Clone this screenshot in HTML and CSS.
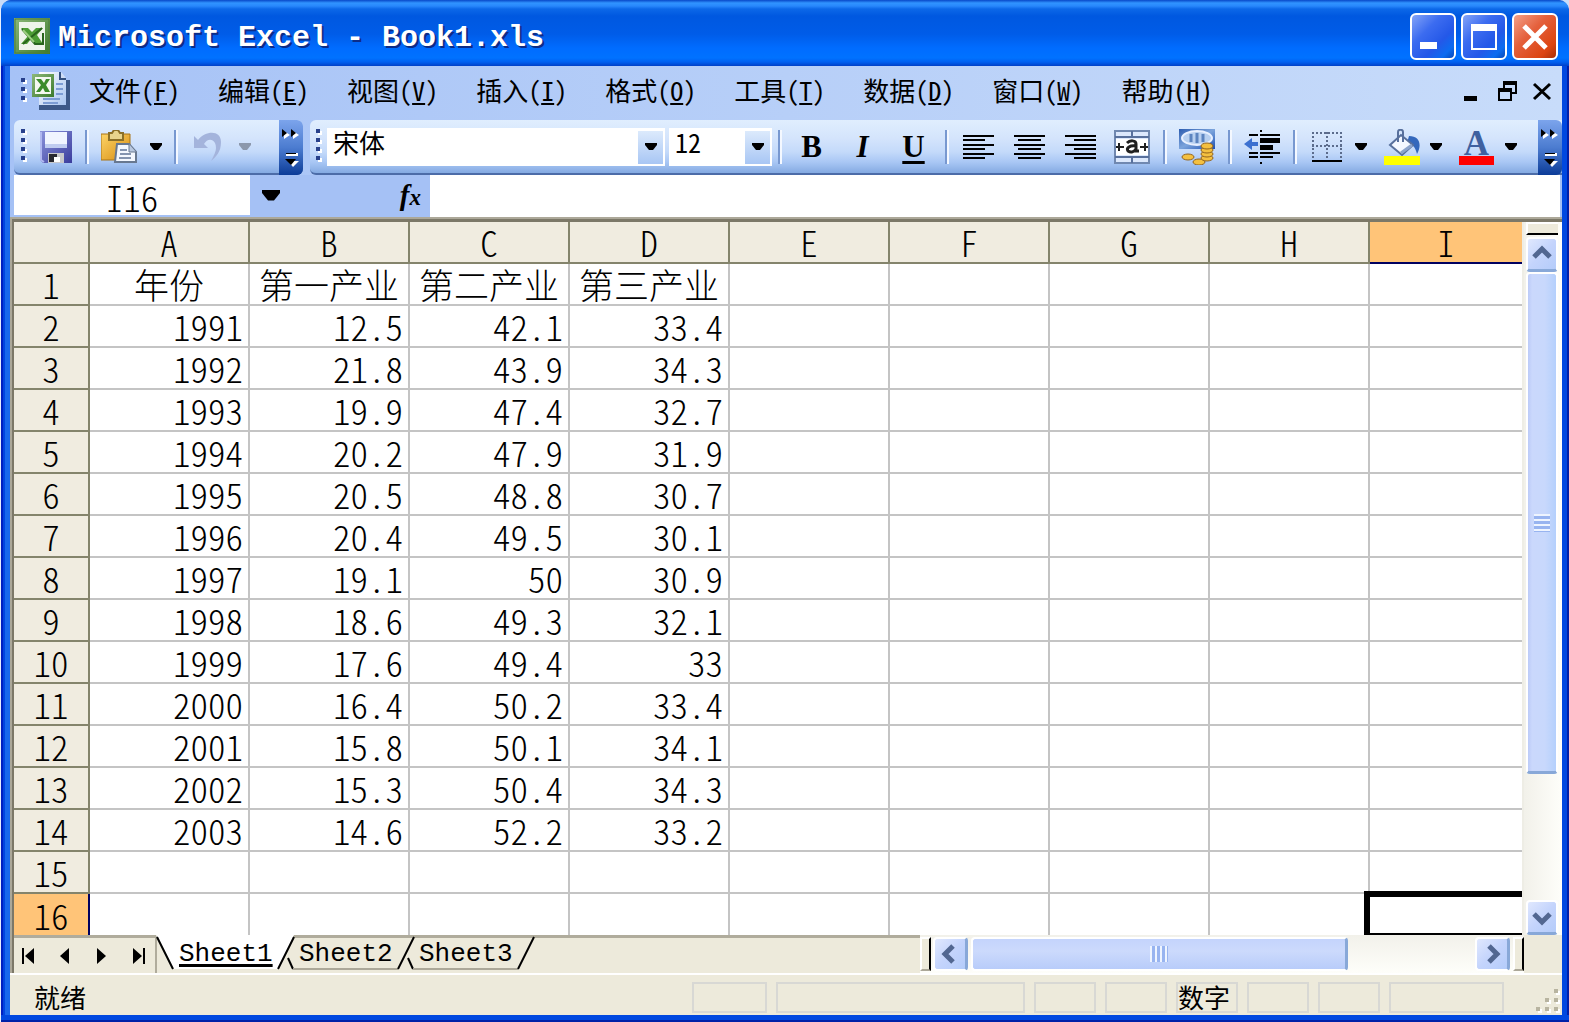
FILE: index.html
```html
<!DOCTYPE html>
<html lang="zh-CN">
<head>
<meta charset="utf-8">
<title>Microsoft Excel - Book1.xls</title>
<link rel="stylesheet" href="styles.css">
</head>
<body>
<svg width="0" height="0" class="defs" aria-hidden="true">
  <defs>
    <linearGradient id="green" x1="0" y1="0" x2="1" y2="1"><stop offset="0" stop-color="#8cb878"/><stop offset="1" stop-color="#3c7a2c"/></linearGradient>
    <linearGradient id="violet" x1="0" y1="0" x2="1" y2="1"><stop offset="0" stop-color="#8c94dc"/><stop offset="1" stop-color="#3a3c9c"/></linearGradient>
    <linearGradient id="gold" x1="0" y1="0" x2="1" y2="1"><stop offset="0" stop-color="#fcd468"/><stop offset="1" stop-color="#d88c10"/></linearGradient>
    <linearGradient id="page" x1="0" y1="0" x2="1" y2="1"><stop offset="0" stop-color="#ffffff"/><stop offset="1" stop-color="#a8c4f0"/></linearGradient>
    <linearGradient id="note" x1="0" y1="0" x2="1" y2="1"><stop offset="0" stop-color="#2c5cb0"/><stop offset=".5" stop-color="#7ca4dc"/><stop offset="1" stop-color="#1c50b4"/></linearGradient>
    <symbol id="arrow" viewBox="0 0 12 8"><path d="M0 0H12V2L8 7H4L0 2Z" fill="currentColor"/></symbol>
    <symbol id="chevrons" viewBox="0 0 20 38">
      <path d="M3 2l6 4-6 4zM12 2l6 4-6 4z" fill="#fff"/><path d="M1 0l5 4-5 4zM10 0l5 4-5 4z" fill="#000"/>
      <path d="M5 24H17V27H5z" fill="#fff"/><path d="M5 24H15V25H5z" fill="#000"/>
      <path d="M7 32H18L12 38z" fill="#fff"/><path d="M4 30H15L10 36z" fill="#000"/>
    </symbol>
    <symbol id="chev" viewBox="0 0 20 20"><path d="M2 13l8-8 8 8" fill="none" stroke="#526791" stroke-width="5"/></symbol>
  </defs>
</svg>
<div class="window">
  <header class="titlebar">
    <svg class="app-icon" viewBox="0 0 36 36" aria-hidden="true">
      <rect width="36" height="36" fill="url(#green)"/><rect x="1" y="1" width="34" height="34" fill="none" stroke="#4c7c3c" stroke-width="1"/>
      <rect x="5" y="4" width="26" height="28" fill="#eef4ea"/>
      <path d="M7 10H14L18 14 22 10H29L23 17 29 26H21L17 21 13 26H7L14 18Z" fill="#4c9c34"/>
      <path d="M28 10L9 26M29 15V26H21L8 11" fill="none" stroke="#28641c" stroke-width="2"/><path d="M9 12L20 24" stroke="#9cd080" stroke-width="2"/>
    </svg>
    <h1>Microsoft Excel - Book1.xls</h1>
    <div class="window-buttons">
      <button type="button" aria-label="最小化"><svg viewBox="0 0 46 47"><path d="M10 29H27V36H10Z" fill="#fff"/></svg></button>
      <button type="button" aria-label="最大化"><svg viewBox="0 0 46 47"><path d="M10 11H36V37H10ZM12 18V35H34V18Z" fill="#fff" fill-rule="evenodd"/></svg></button>
      <button type="button" class="close" aria-label="关闭"><svg viewBox="0 0 46 47"><path d="M12 13L34 35M34 13L12 35" stroke="#fff" stroke-width="5"/></svg></button>
    </div>
  </header>
  <div class="client">
    <nav class="menubar">
      <span class="grip short"></span>
      <svg class="doc-icon" viewBox="0 0 38 38" aria-hidden="true">
        <path d="M7 33V38H38V8H34V33Z" fill="#3c5888"/><path d="M7 0H29L34 6V33H7Z" fill="url(#page)"/>
        <path d="M28 0V7H34" fill="#cfdcf4" stroke="#345080" stroke-width="2"/><path d="M24 12H31M24 17H31M24 22H31M11 27H28M11 31H26" stroke="#7c9cd4" stroke-width="2"/>
        <rect x="0" y="2" width="22" height="23" fill="url(#green)"/><rect x="3" y="5" width="16" height="17" fill="#f4f8f0"/>
        <path d="M4 7H9L12 11 14 7H18L14 13 18 20H13L11 16 8 20H4L9 13Z" fill="#3c8c2c"/>
      </svg>
      <ul>
        <li><button type="button">文件(<u>F</u>)</button></li>
        <li><button type="button">编辑(<u>E</u>)</button></li>
        <li><button type="button">视图(<u>V</u>)</button></li>
        <li><button type="button">插入(<u>I</u>)</button></li>
        <li><button type="button">格式(<u>O</u>)</button></li>
        <li><button type="button">工具(<u>T</u>)</button></li>
        <li><button type="button">数据(<u>D</u>)</button></li>
        <li><button type="button">窗口(<u>W</u>)</button></li>
        <li><button type="button">帮助(<u>H</u>)</button></li>
      </ul>
      <div class="doc-buttons">
        <button type="button" aria-label="最小化窗口"><svg viewBox="0 0 20 20"><path d="M0 15H13V20H0Z"/></svg></button>
        <button type="button" aria-label="还原窗口"><svg viewBox="0 0 20 20"><path d="M5 0H19V13H14V20H0V7H5ZM7 4V7H14V11H17V4ZM2 11V18H12V11Z" fill-rule="evenodd"/></svg></button>
        <button type="button" aria-label="关闭窗口"><svg viewBox="0 0 20 20"><path d="M2 3L18 18M18 3L2 18" stroke="#000" stroke-width="3"/></svg></button>
      </div>
    </nav>
    <div class="toolbars">
      <div class="toolbar standard">
        <span class="grip"></span>
        <button type="button" class="tool save" aria-label="保存"><svg width="32" height="32" viewBox="0 0 32 32">
          <path d="M0 0H32V32H3L0 29Z" fill="url(#violet)"/><path d="M5 1H27V16H5Z" fill="#f0f4ff"/><path d="M5 13H27V17H5Z" fill="#c0ccf0"/><path d="M8 22H24V32H8Z" fill="#c8c8cc"/><path d="M9 23H17V31H9Z" fill="#282830"/><path d="M14 26H20V31H14Z" fill="#fff"/><path d="M1 1V29L4 31" fill="none" stroke="#b0b8f0" stroke-width="2"/></svg></button>
        <span class="sep"></span>
        <button type="button" class="tool" aria-label="粘贴"><svg width="36" height="34" viewBox="0 0 36 34">
          <path d="M0 4H29V30H0Z" fill="url(#gold)" stroke="#a87418"/><path d="M9 3H11L13 0H17L19 3H22V10H8V3Z" fill="#e8d48c" stroke="#8c7028" stroke-width="2"/><path d="M16 14H28L35 22V32H14Z" fill="#f4f8ff" stroke="#687890" stroke-width="2"/><path d="M28 14V22H35" fill="#b8c8e0" stroke="#687890"/><path d="M19 20H26M19 24H30M18 28H30" stroke="#8494b0" stroke-width="2"/></svg></button>
        <button type="button" class="drop" aria-label="粘贴选项"><svg><use href="#arrow"/></svg></button>
        <span class="sep"></span>
        <button type="button" class="tool" aria-label="撤消" disabled><svg width="28" height="30" viewBox="0 0 28 30">
          <path d="M0 4L4 8C12-2 27-2 27 10 27 20 22 25 17 29 22 20 23 16 21 11 18 6 13 7 10 12L14 16H0Z" fill="#a4b4dc"/></svg></button>
        <button type="button" class="drop" aria-label="撤消选项" disabled><svg><use href="#arrow"/></svg></button>
        <button type="button" class="options" aria-label="工具栏选项"><svg><use href="#chevrons"/></svg></button>
      </div>
      <div class="toolbar formatting">
        <span class="grip"></span>
        <div class="combo font"><select aria-label="字体"><option>宋体</option></select><span class="combo-arrow"><svg><use href="#arrow"/></svg></span></div>
        <div class="combo size"><select aria-label="字号"><option>12</option></select><span class="combo-arrow"><svg><use href="#arrow"/></svg></span></div>
        <span class="sep"></span>
        <button type="button" class="tool letter bold">B</button>
        <button type="button" class="tool letter italic">I</button>
        <button type="button" class="tool letter under">U</button>
        <span class="sep"></span>
        <button type="button" class="tool" aria-label="左对齐"><svg width="32" height="26" viewBox="0 0 32 26"><path d="M0 2H31M0 6H22M0 11H31M0 15H22M0 20H31M0 24H22" stroke="#000" stroke-width="2"/></svg></button>
        <button type="button" class="tool" aria-label="居中"><svg width="32" height="26" viewBox="0 0 32 26"><path d="M0 2H31M4 6H27M0 11H31M4 15H27M0 20H31M4 24H27" stroke="#000" stroke-width="2"/></svg></button>
        <button type="button" class="tool" aria-label="右对齐"><svg width="32" height="26" viewBox="0 0 32 26"><path d="M0 2H31M9 6H31M0 11H31M9 15H31M0 20H31M9 24H31" stroke="#000" stroke-width="2"/></svg></button>
        <button type="button" class="tool" aria-label="合并及居中"><svg width="36" height="34" viewBox="0 0 36 34">
          <rect x="1" y="1" width="34" height="32" fill="#dce8fc" stroke="#7088b0" stroke-width="2"/><path d="M1 7H35M1 27H35M18 1V7M18 27V33" stroke="#58709c" stroke-width="2"/><path d="M2 9H34V25H2Z" fill="#fff"/><path d="M2 17H10M26 17H34M5 13V21M31 13V21" stroke="#202020" stroke-width="2"/><path d="M13 13C16 10 22 10 22 14V21H25M22 16C16 15 12 18 14 21 17 23 20 22 22 19" fill="none" stroke="#202020" stroke-width="3"/></svg></button>
        <span class="sep"></span>
        <button type="button" class="tool" aria-label="货币样式"><svg width="36" height="36" viewBox="0 0 36 36">
          <path d="M0 0H36V20H0Z" fill="url(#note)"/><ellipse cx="18" cy="9" rx="15" ry="7" fill="#b8d0f0" stroke="#e8f0ff" stroke-width="2"/><path d="M12 5V13M18 4V14M24 5V13" stroke="#5c84c0" stroke-width="3"/>
          <g fill="#f4c040" stroke="#94641c"><ellipse cx="9" cy="28" rx="6" ry="3"/><ellipse cx="20" cy="33" rx="6" ry="3"/><ellipse cx="28" cy="29" rx="6" ry="3"/><ellipse cx="28" cy="25" rx="6" ry="3"/><ellipse cx="28" cy="21" rx="6" ry="3"/><ellipse cx="28" cy="17" rx="6" ry="3"/></g></svg></button>
        <span class="sep"></span>
        <button type="button" class="tool" aria-label="减少缩进量"><svg width="36" height="34" viewBox="0 0 36 34">
          <path d="M5 5H14M16 5H36M5 23H14M16 23H36M5 27H14M16 27H29" stroke="#000" stroke-width="2"/><path d="M16 8H36V13H16ZM16 15H29V20H16Z"/><path d="M16 0H18V2H16ZM16 32H18V34H16Z"/><path d="M0 14L8 8V12H14V16H8V20Z" fill="#3c70d0"/></svg></button>
        <span class="sep"></span>
        <button type="button" class="tool" aria-label="边框"><svg width="30" height="30" viewBox="0 0 30 30">
          <path d="M0 1H30M0 14H30M1 0V27M15 0V27M29 0V27" stroke="#5c6c8c" stroke-width="2" stroke-dasharray="2 2"/><path d="M0 28H30V30H0Z"/></svg></button>
        <button type="button" class="drop" aria-label="边框选项"><svg><use href="#arrow"/></svg></button>
        <button type="button" class="tool" aria-label="填充颜色"><svg width="36" height="36" viewBox="0 0 36 36">
          <path d="M25 7C36 7 38 16 33 25 31 17 28 15 23 14Z" fill="#3468bc"/><path d="M6 16L17 6 29 16 18 26Z" fill="#f4f8ff" stroke="#58709c" stroke-width="2"/><path d="M14 13V3C14 0 19 0 19 3V13" fill="none" stroke="#58709c" stroke-width="2"/><path d="M17 24L28 16" stroke="#8ca4cc" stroke-width="3"/><path d="M0 27H36V36H0Z" fill="#ff0"/></svg></button>
        <button type="button" class="drop" aria-label="填充颜色选项"><svg><use href="#arrow"/></svg></button>
        <button type="button" class="tool font-color" aria-label="字体颜色"><span>A</span></button>
        <button type="button" class="drop" aria-label="字体颜色选项"><svg><use href="#arrow"/></svg></button>
        <button type="button" class="options" aria-label="工具栏选项"><svg><use href="#chevrons"/></svg></button>
      </div>
    </div>
    <div class="formula-bar">
      <input class="name-box" aria-label="名称框" value="I16">
      <button type="button" class="name-drop" aria-label="名称列表"><svg><use href="#arrow"/></svg></button>
      <button type="button" class="fx" aria-label="插入函数"><i>f</i><i class="x">x</i></button>
      <input class="formula" aria-label="编辑栏">
    </div>
    <main class="workbook">
      <div class="sheet-row">
        <div class="sheet">
          <table>
            <colgroup><col class="row-col"><col><col><col><col><col><col><col><col><col class="last-col"></colgroup>
            <thead><tr><th></th><th>A</th><th>B</th><th>C</th><th>D</th><th>E</th><th>F</th><th>G</th><th>H</th><th class="active">I</th></tr></thead>
            <tbody>
              <tr class="labels"><th>1</th><td>年份</td><td>第一产业</td><td>第二产业</td><td>第三产业</td><td></td><td></td><td></td><td></td><td></td></tr>
              <tr><th>2</th><td>1991</td><td>12.5</td><td>42.1</td><td>33.4</td><td></td><td></td><td></td><td></td><td></td></tr>
              <tr><th>3</th><td>1992</td><td>21.8</td><td>43.9</td><td>34.3</td><td></td><td></td><td></td><td></td><td></td></tr>
              <tr><th>4</th><td>1993</td><td>19.9</td><td>47.4</td><td>32.7</td><td></td><td></td><td></td><td></td><td></td></tr>
              <tr><th>5</th><td>1994</td><td>20.2</td><td>47.9</td><td>31.9</td><td></td><td></td><td></td><td></td><td></td></tr>
              <tr><th>6</th><td>1995</td><td>20.5</td><td>48.8</td><td>30.7</td><td></td><td></td><td></td><td></td><td></td></tr>
              <tr><th>7</th><td>1996</td><td>20.4</td><td>49.5</td><td>30.1</td><td></td><td></td><td></td><td></td><td></td></tr>
              <tr><th>8</th><td>1997</td><td>19.1</td><td>50</td><td>30.9</td><td></td><td></td><td></td><td></td><td></td></tr>
              <tr><th>9</th><td>1998</td><td>18.6</td><td>49.3</td><td>32.1</td><td></td><td></td><td></td><td></td><td></td></tr>
              <tr><th>10</th><td>1999</td><td>17.6</td><td>49.4</td><td>33</td><td></td><td></td><td></td><td></td><td></td></tr>
              <tr><th>11</th><td>2000</td><td>16.4</td><td>50.2</td><td>33.4</td><td></td><td></td><td></td><td></td><td></td></tr>
              <tr><th>12</th><td>2001</td><td>15.8</td><td>50.1</td><td>34.1</td><td></td><td></td><td></td><td></td><td></td></tr>
              <tr><th>13</th><td>2002</td><td>15.3</td><td>50.4</td><td>34.3</td><td></td><td></td><td></td><td></td><td></td></tr>
              <tr><th>14</th><td>2003</td><td>14.6</td><td>52.2</td><td>33.2</td><td></td><td></td><td></td><td></td><td></td></tr>
              <tr><th>15</th><td></td><td></td><td></td><td></td><td></td><td></td><td></td><td></td><td></td></tr>
              <tr class="final"><th class="active">16</th><td></td><td></td><td></td><td></td><td></td><td></td><td></td><td></td><td class="selected"></td></tr>
            </tbody>
          </table>
        </div>
        <div class="scroll vertical">
          <span class="splitter"></span>
          <button type="button" class="scroll-button" aria-label="向上滚动"><svg><use href="#chev"/></svg></button>
          <div class="thumb"><span></span></div>
          <div class="track"></div>
          <button type="button" class="scroll-button down" aria-label="向下滚动"><svg><use href="#chev"/></svg></button>
        </div>
      </div>
      <div class="tab-row">
        <div class="tab-nav">
          <button type="button" aria-label="第一张"><svg viewBox="0 0 14 18"><path d="M1 1H3V17H1ZM13 1V17L4 9Z"/></svg></button>
          <button type="button" aria-label="上一张"><svg viewBox="0 0 14 18"><path d="M11 1V17L2 9Z"/></svg></button>
          <button type="button" aria-label="下一张"><svg viewBox="0 0 14 18"><path d="M2 1V17L11 9Z"/></svg></button>
          <button type="button" aria-label="最后一张"><svg viewBox="0 0 14 18"><path d="M11 1H13V17H11ZM1 1V17L10 9Z"/></svg></button>
        </div>
        <div class="tabs">
          <button type="button" class="tab current"><svg viewBox="0 0 140 37" aria-hidden="true"><path d="M0 0H138L122 34H18Z" fill="#fff"/><path d="M1 2L17 34M138 2L122 34" fill="none" stroke="#000" stroke-width="2"/></svg><span>Sheet1</span></button>
          <button type="button" class="tab"><svg viewBox="0 0 140 37" aria-hidden="true"><path d="M12 23L17 34" stroke="#000" stroke-width="2"/><path d="M17 34H122" stroke="#aca899" stroke-width="2"/><path d="M138 2L122 34" stroke="#000" stroke-width="2"/></svg><span>Sheet2</span></button>
          <button type="button" class="tab"><svg viewBox="0 0 140 37" aria-hidden="true"><path d="M12 23L17 34" stroke="#000" stroke-width="2"/><path d="M17 34H122" stroke="#aca899" stroke-width="2"/><path d="M138 2L122 34" stroke="#000" stroke-width="2"/></svg><span>Sheet3</span></button>
        </div>
        <div class="scroll horizontal">
          <span class="splitter"></span>
          <button type="button" class="scroll-button left" aria-label="向左滚动"><svg><use href="#chev"/></svg></button>
          <div class="thumb"><span></span></div>
          <div class="track"></div>
          <button type="button" class="scroll-button right" aria-label="向右滚动"><svg><use href="#chev"/></svg></button>
          <span class="splitter"></span>
        </div>
      </div>
    </main>
    <footer class="statusbar">
      <span class="message">就绪</span>
      <span class="panel small"></span>
      <span class="panel large"></span>
      <span class="panel"></span>
      <span class="panel"></span>
      <span class="panel">数字</span>
      <span class="panel"></span>
      <span class="panel"></span>
      <span class="panel medium"></span>
      <svg class="resize" viewBox="0 0 24 24" aria-hidden="true"><path d="M20 2h4v4h-4zM11 11h4v4h-4zM20 11h4v4h-4zM2 20h4v4H2zM11 20h4v4h-4zM20 20h4v4h-4z" fill="#fff"/><path d="M18 0h4v4h-4zM9 9h4v4H9zM18 9h4v4h-4zM0 18h4v4H0zM9 18h4v4H9zM18 18h4v4h-4z" fill="#b8b4a0"/></svg>
    </footer>
  </div>
</div>
</body>
</html>
```
FILE: styles.css
```css
* { box-sizing: border-box; }

body {
  margin: 0;
  background: #c8dcf8;
  color: #000;
  font-family: "Noto Sans CJK SC", sans-serif;
  font-size: 26px;
  font-feature-settings: "hwid";
}

button, input, select {
  margin: 0;
  padding: 0;
  border: 0;
  border-radius: 0;
  background: none;
  color: inherit;
  font: inherit;
  font-feature-settings: inherit;
}

svg { display: block; flex: none; }
.defs { position: absolute; }

.window {
  display: flex;
  flex-direction: column;
  min-height: 100vh;
  padding-bottom: 7px;
  border-left: 1px solid #e8f0ff;
  border-radius: 12px 12px 0 0;
  background:
    linear-gradient(#0048e0 0 5px, #0020a8 5px) bottom / 100% 7px no-repeat,
    linear-gradient(to right, #0020c0 0 2px, #0044e0 2px 4px, #1868ec 4px 9px, transparent 9px),
    linear-gradient(to left, #0020a8 0 2px, #0048e0 2px);
}

/* Title bar */
.titlebar {
  display: flex;
  align-items: center;
  height: 66px;
  padding: 6px 11px 0 13px;
  border-radius: 10px 10px 0 0;
  background: linear-gradient(#0848c8 0, #3094ff 3px, #2888fc 6px, #0c68e8 9px, #0058e0 16px, #005ce8 34px, #006cff 48px, #0072ff 58px, #0060f0 62px, #0040c8 66px);
}
.app-icon { width: 36px; height: 36px; }
.titlebar h1 {
  margin: 0 auto 0 8px;
  padding-top: 4px;
  color: #fff;
  font: bold 30px/40px "Liberation Mono", monospace;
  text-shadow: 2px 2px 0 #0c2c88;
  white-space: nowrap;
}
.window-buttons { display: flex; gap: 5px; }
.window-buttons button {
  width: 46px;
  height: 47px;
  border: 2px solid #fff;
  border-radius: 6px;
  background: linear-gradient(135deg, #84a4f8 0, #3c6cf0 35%, #2458e8 65%, #0c6cf0 85%, #0848b8 100%);
}
.window-buttons .close { background: linear-gradient(135deg, #f4a088 0, #e4603c 40%, #dc4410 80%, #a83008 100%); }
.window-buttons svg { width: 46px; height: 47px; margin: -2px; }

.client {
  display: flex;
  flex: 1;
  flex-direction: column;
  margin: 0 7px 0 9px;
  background: #edeadb;
}

/* Menu bar */
.menubar {
  display: flex;
  align-items: center;
  height: 54px;
  padding: 0 10px 4px 11px;
  background: linear-gradient(to right, #a6c2f6, #c8dcfa);
}
.grip {
  flex: none;
  width: 6px;
  height: 35px;
  margin-right: 5px;
  background:
    repeating-linear-gradient(#27408b 0 4px, transparent 4px 9px) left top / 4px 100% no-repeat,
    repeating-linear-gradient(transparent 0 2px, #fff 2px 6px, transparent 6px 9px) right top / 4px 100% no-repeat;
}
.grip.short { height: 26px; }
.doc-icon { width: 38px; height: 38px; }
.menubar ul {
  display: flex;
  gap: 38px;
  margin: 0 auto 0 19px;
  padding: 0 0 4px;
  list-style: none;
}
.menubar li button { line-height: 36px; white-space: nowrap; }
.menubar u { text-decoration-thickness: 2px; text-underline-offset: 2px; }
.doc-buttons { display: flex; gap: 14px; }
.doc-buttons svg { width: 20px; height: 20px; }

/* Toolbars */
.toolbars {
  display: flex;
  gap: 7px;
  padding-left: 4px;
  background: linear-gradient(to right, #a6c2f6, #c8dcfa);
}
.toolbar {
  display: flex;
  align-items: center;
  height: 55px;
  border-bottom: 2px solid #4c6ca8;
  border-radius: 6px;
  background: linear-gradient(#e0eefe 0, #d4e4fc 35%, #c4dafa 60%, #a8c6f4 80%, #84aae2 100%);
}
.standard { flex: none; width: 289px; padding-left: 7px; }
.formatting { flex: 1; min-width: 0; padding-left: 6px; border-radius: 6px 0 0 6px; }
.tool {
  display: flex;
  align-items: center;
  justify-content: center;
  width: 51px;
  height: 40px;
}
.tool.save { width: 47px; }
.drop { width: 24px; height: 40px; padding-left: 3px; }
.standard .drop { padding-left: 6px; }
.drop svg, .combo-arrow svg { width: 12px; height: 8px; }
.drop:disabled { color: #8c98ac; }
.sep {
  flex: none;
  width: 4px;
  height: 34px;
  margin: 0 4px 0 6px;
  background: linear-gradient(to right, #7898d0 2px, #f4f8ff 2px);
}
.options {
  display: flex;
  align-items: center;
  justify-content: center;
  width: 24px;
  height: 55px;
  margin: 0 0 -2px auto;
  border-radius: 0 6px 6px 0;
  background: linear-gradient(#7ca4ec, #4c7cd0 50%, #0c3c98);
}
.options svg { width: 20px; height: 38px; }
.combo { position: relative; flex: none; height: 38px; background: #fff; }
.combo.font { width: 338px; margin-right: 4px; }
.combo.size { width: 103px; }
.combo select {
  display: block;
  width: 100%;
  height: 38px;
  padding: 0 0 10px 6px;
  appearance: none;
  line-height: 28px;
}
.combo-arrow {
  position: absolute;
  top: 3px;
  right: 2px;
  display: flex;
  align-items: center;
  justify-content: center;
  width: 25px;
  height: 33px;
  background: linear-gradient(#dceafc, #a8c6f4);
  pointer-events: none;
}
.letter { font: 31px/36px "Liberation Serif", serif; }
.bold { font-weight: bold; }
.italic { font-style: italic; font-weight: bold; }
.under { font-weight: bold; text-decoration: underline; text-decoration-thickness: 3px; text-underline-offset: 4px; }
.font-color span {
  width: 35px;
  height: 36px;
  border-bottom: 9px solid #f00;
  color: #40619f;
  font: bold 35px/30px "Liberation Serif", serif;
}

/* Formula bar */
.formula-bar {
  display: flex;
  height: 42px;
  padding: 0 2px 0 4px;
  background: #a5c1f5;
}
.name-box {
  width: 236px;
  height: 40px;
  padding-top: 3px;
  background: #fff;
  font-size: 35px;
  font-weight: 300;
  line-height: 37px;
  text-align: center;
}
.name-drop { width: 42px; height: 42px; padding-left: 12px; }
.name-drop svg { width: 18px; height: 12px; }
.fx {
  margin-left: auto;
  padding-right: 9px;
  font: bold 29px/36px "Liberation Serif", serif;
}
.fx .x { font-size: 23px; }
.formula { width: calc(100% - 416px); margin-left: 0; background: #fff; }

/* Worksheet */
.workbook {
  flex: 1;
  border: solid #aca899;
  border-width: 2px 0 0 2px;
}
.sheet-row {
  display: flex;
  border-top: 3px solid #7c7868;
  border-left: 2px solid #7c7868;
}
.sheet { flex: 1; min-width: 0; overflow: hidden; background: #fff; }
table {
  width: 100%;
  border-spacing: 0;
  table-layout: fixed;
}
col { width: 160px; }
.row-col { width: 76px; }
.last-col { width: auto; }
tr { height: 42px; }
.final { height: 41px; }
th, td {
  padding: 0;
  border: solid #c4c4c4;
  border-width: 0 2px 2px 0;
  font-size: 35px;
  font-weight: 300;
  line-height: 40px;
  white-space: nowrap;
}
th {
  border-color: #84846c;
  background: #f0ece0;
}
td { padding-right: 5px; text-align: right; }
.labels td { padding: 0; text-align: center; }
th:last-child, td:last-child { border-right: 0; }
.final th, .final td { border-bottom: 0; }
th.active { background: #ffc478; }
thead th.active { border-bottom-color: #000060; }
tbody th.active { border-right-color: #000060; }
.selected { position: relative; }
.selected::after {
  content: "";
  position: absolute;
  inset: -3px 0 0 -6px;
  border: solid #000;
  border-width: 6px 0 2px 6px;
}

/* Scroll bars */
.scroll { display: flex; flex: none; }
.vertical {
  flex-direction: column;
  width: 40px;
  padding: 0 4px 0 2px;
  border-left: 2px solid #eeede5;
  background: linear-gradient(to right, #f2f1ea, #fefefa);
}
.scroll-button {
  display: flex;
  flex: none;
  align-items: center;
  justify-content: center;
  width: 32px;
  height: 35px;
  border: 2px solid #fff;
  border-bottom: 3px solid #88a8d8;
  border-radius: 4px;
  background: linear-gradient(135deg, #e0e8fe, #c4d4fc 50%, #b4ccfa);
}
.scroll-button svg { width: 20px; height: 20px; }
.down svg { transform: rotate(180deg); }
.left svg { transform: rotate(-90deg); }
.right svg { transform: rotate(90deg); }
.vertical .splitter {
  height: 13px;
  margin-bottom: 2px;
  border: solid #fff;
  border-width: 2px 0 0 2px;
  border-bottom: 2px solid #000;
  background: #edeadb;
}
.thumb {
  display: flex;
  align-items: center;
  justify-content: center;
  border: 2px solid #fff;
  border-radius: 4px;
  background: linear-gradient(to right, #bccbf8, #cad8fc 15%, #c8d8fc 60%, #b4d0fc);
}
.vertical .thumb { flex: 501; border-bottom: 3px solid #88a8d8; }
.vertical .thumb span {
  width: 16px;
  height: 18px;
  background: repeating-linear-gradient(#eef4ff 0 2px, #98b4f0 2px 5px);
}
.vertical .track { flex: 127; }
.tab-row {
  display: flex;
  height: 38px;
  border-left: 2px solid #7c7868;
}
.tab-nav {
  display: flex;
  gap: 23px;
  width: 143px;
  padding-left: 7px;
  border-top: 3px solid #b0ac9c;
  border-right: 2px solid #b0ac9c;
}
.tab-nav svg { width: 14px; height: 18px; }
.tabs {
  display: flex;
  flex: 1;
  border-top: 3px solid #b0ac9c;
}
.tab {
  position: relative;
  width: 120px;
  height: 38px;
  margin-top: -3px;
  padding-left: 22px;
  font: 26px/36px "Liberation Mono", monospace;
  text-align: left;
}
.tab svg { position: absolute; top: 0; left: -1px; width: 140px; height: 37px; }
.tab span { position: relative; }
.current { z-index: 1; }
.current span { text-decoration: underline; text-decoration-thickness: 3px; text-underline-offset: 3px; }
.horizontal {
  width: 604px;
  padding-top: 2px;
  background: linear-gradient(#f2f1ea, #fefefa);
  margin-right: 38px;
}
.horizontal .splitter {
  flex: none;
  width: 11px;
  height: 34px;
  border: 2px solid #fff;
  border-right: 2px solid #000;
  border-bottom-color: #aca899;
  background: #edeadb;
}
.horizontal .scroll-button {
  width: 35px;
  height: 34px;
  margin: 0 3px 0 2px;
  border-right: 3px solid #88a8d8;
  border-bottom: 2px solid #fff;
}
.horizontal .thumb {
  flex: 374;
  height: 34px;
  border-right: 3px solid #88a8d8;
  background: linear-gradient(#c4d4fc, #ccdafc 40%, #b8ccfa);
}
.horizontal .thumb span {
  width: 18px;
  height: 16px;
  background: repeating-linear-gradient(to right, #eef4ff 0 2px, #98b4f0 2px 5px);
}
.horizontal .track { flex: 126; }

/* Status bar */
.statusbar {
  display: flex;
  gap: 9px;
  height: 42px;
  padding: 7px 2px 2px 24px;
  border-top: 2px solid #fff;
}
.message { flex: 1; line-height: 29px; }
.panel {
  width: 62px;
  height: 31px;
  border: 2px solid #d8d8d4;
  line-height: 25px;
  white-space: nowrap;
}
.panel.small { width: 75px; }
.panel.medium { width: 115px; }
.panel.large { width: 249px; }
.resize { align-self: flex-end; width: 24px; height: 24px; margin-left: 23px; }
```
